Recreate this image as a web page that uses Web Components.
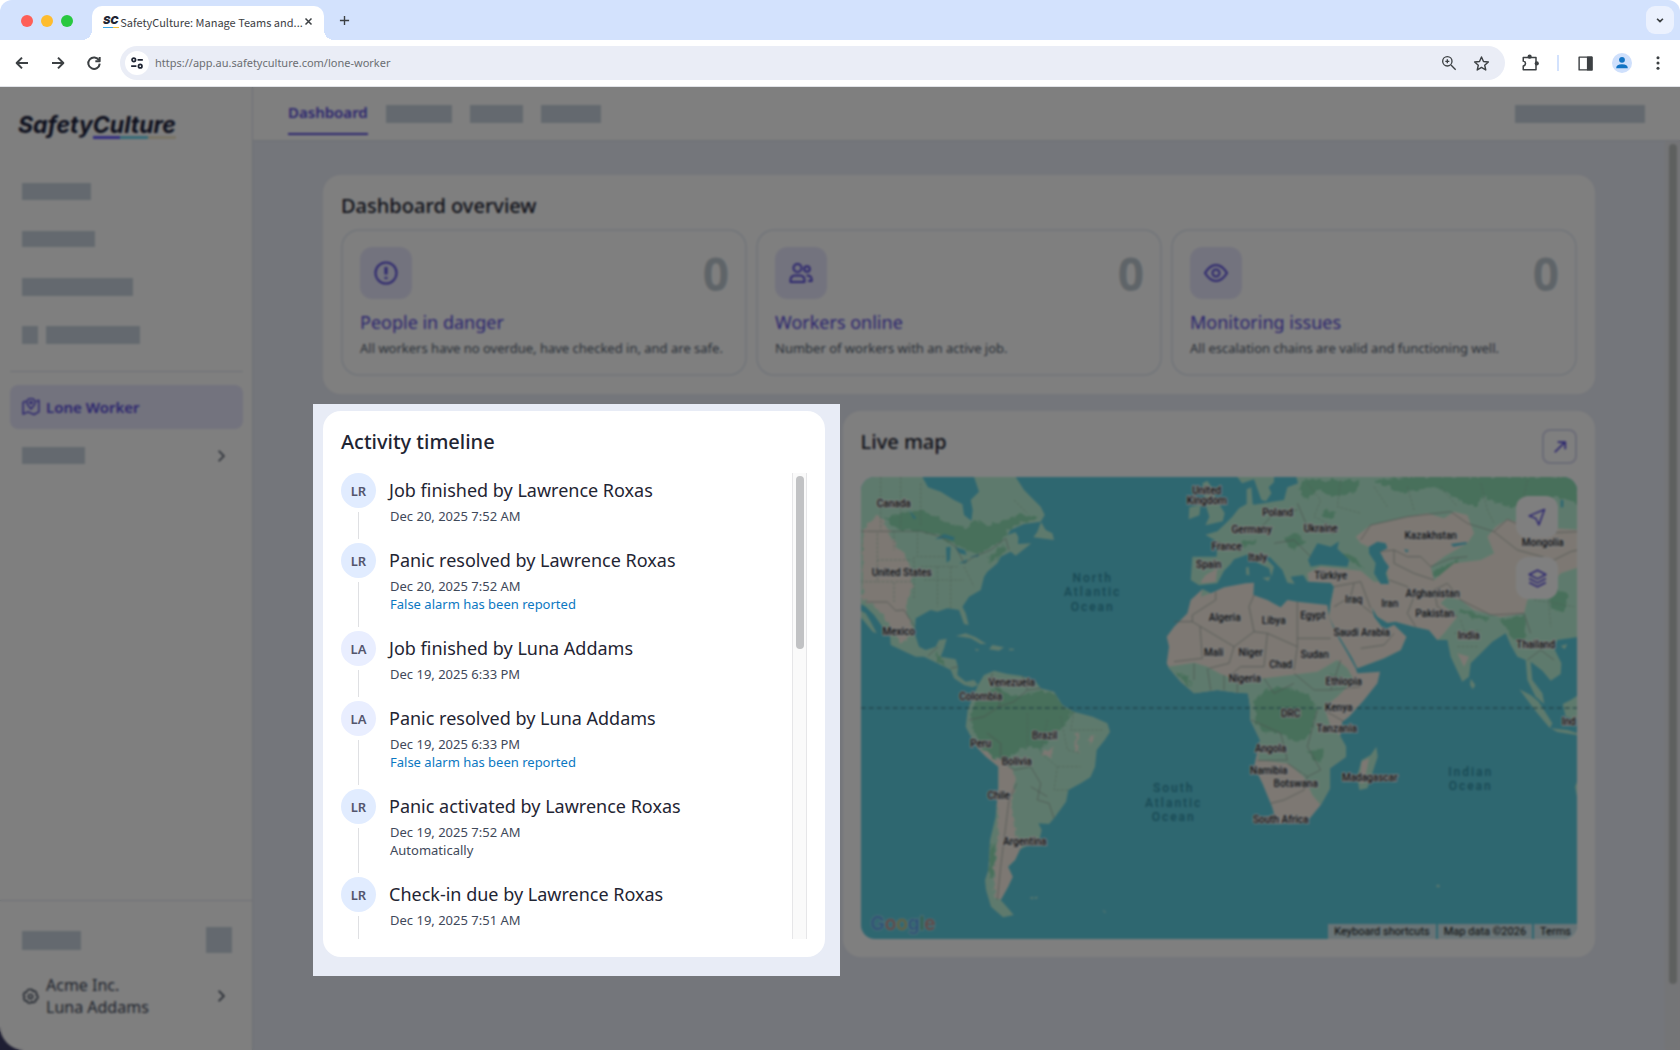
<!DOCTYPE html>
<html lang="en">
<head>
<meta charset="utf-8">
<title>SafetyCulture: Manage Teams and Workers</title>
<style>
  html, body { margin: 0; height: 100%; }
  body {
    --brand: #574bdc; --ink: #1f2533; --muted: #3f495a; --canvas: #e8ecf6;
    --line: #dbe0ea; --stub: #c9d3de; --lilac: #e7e7fc;
    display: flex; flex-direction: column; min-height: 100vh; overflow: hidden;
    background: #fff; color: var(--ink);
    font: 14px/20px "Noto Sans", "Open Sans", sans-serif;
  }
</style>
</head>
<body>
<browser-chrome tab="SafetyCulture: Manage Teams and..." url="https://app.au.safetyculture.com/lone-worker"></browser-chrome>
<app-shell>
  <side-nav slot="side"></side-nav>
  <top-tabs slot="top"></top-tabs>
  <panel-card heading="Dashboard overview">
    <stat-row>
      <stat-card icon="alert" heading="People in danger" count="0">All workers have no overdue, have checked in, and are safe.</stat-card>
      <stat-card icon="people" heading="Workers online" count="0">Number of workers with an active job.</stat-card>
      <stat-card icon="eye" heading="Monitoring issues" count="0">All escalation chains are valid and functioning well.</stat-card>
    </stat-row>
  </panel-card>
  <two-columns>
    <spot-light>
      <panel-card heading="Activity timeline" class="timeline">
        <time-line>
          <timeline-item initials="LR" heading="Job finished by Lawrence Roxas" date="Dec 20, 2025 7:52 AM"></timeline-item>
          <timeline-item initials="LR" heading="Panic resolved by Lawrence Roxas" date="Dec 20, 2025 7:52 AM" link="False alarm has been reported"></timeline-item>
          <timeline-item initials="LA" heading="Job finished by Luna Addams" date="Dec 19, 2025 6:33 PM"></timeline-item>
          <timeline-item initials="LA" heading="Panic resolved by Luna Addams" date="Dec 19, 2025 6:33 PM" link="False alarm has been reported"></timeline-item>
          <timeline-item initials="LR" heading="Panic activated by Lawrence Roxas" date="Dec 19, 2025 7:52 AM" note="Automatically"></timeline-item>
          <timeline-item initials="LR" heading="Check-in due by Lawrence Roxas" date="Dec 19, 2025 7:51 AM"></timeline-item>
        </time-line>
      </panel-card>
    </spot-light>
    <panel-card heading="Live map">
      <icon-button slot="action" icon="expand" label="Open live map"></icon-button>
      <live-map></live-map>
    </panel-card>
  </two-columns>
</app-shell>

<script>
const ICONS = {
  back: ['0 0 24 24', '<path d="M21 12H4M12 4l-8 8 8 8"/>'],
  forward: ['0 0 24 24', '<path d="M3 12h17M12 4l8 8-8 8"/>'],
  reload: ['0 0 24 24', '<path d="M19.500 8A8.600 8.600 0 1 0 20.600 13"/><path d="M20.500 3v6.500H14"/>'],
  tune: ['0 0 24 24', '<circle cx="6.500" cy="6.500" r="3"/><path d="M13 6.500h9M2 17.500h9"/><circle cx="17.500" cy="17.500" r="3"/>'],
  zoom: ['0 0 24 24', '<circle cx="9.500" cy="9.500" r="7"/><path d="M15 15l7 7M6.500 9.500h6M9.500 6.500v6"/>'],
  star: ['0 0 24 24', '<path d="M12 2.800l2.800 6.300 6.900.7-5.200 4.600 1.500 6.800-6-3.600-6 3.600 1.500-6.800L2.300 9.800l6.900-.7z"/>'],
  puzzle: ['0 0 24 24', '<path d="M3 9.500V4.500h17V21H3v-5q3-.5 3-3.200T3 9.500z"/><g fill="currentColor" stroke="none"><circle cx="11.500" cy="3.500" r="2.800"/><circle cx="21" cy="12.500" r="2.800"/></g>'],
  panel: ['0 0 24 24', '<path d="M3 3h18v18H3z"/><path d="M15 3h6v18h-6z" fill="currentColor"/>'],
  user: ['0 0 24 24', '<g fill="currentColor" stroke="none"><circle cx="12" cy="6.500" r="5"/><path d="M2 21q0-7 10-7t10 7z"/></g>'],
  dots: ['0 0 24 24', '<g fill="currentColor" stroke="none"><circle cx="12" cy="4" r="2.300"/><circle cx="12" cy="12" r="2.300"/><circle cx="12" cy="20" r="2.300"/></g>'],
  down: ['0 0 24 24', '<path d="M5 9l7 7 7-7"/>'],
  close: ['0 0 24 24', '<path d="M4 4l16 16M20 4L4 20"/>'],
  plus: ['0 0 24 24', '<path d="M12 2v20M2 12h20"/>'],
  right: ['0 0 24 24', '<path d="M8 3l9 9-9 9"/>'],
  alert: ['0 0 24 24', '<circle cx="12" cy="12" r="10.500"/><path d="M12 6v7.500M12 16v2" stroke-width="3"/>'],
  people: ['0 0 24 24', '<circle cx="8.500" cy="7" r="4"/><path d="M1.500 21v-1.500q0-5 4.500-5h5q4.500 0 4.500 5V21z"/><circle cx="18" cy="8" r="2.800"/><path d="M17.500 14.500q5.200-.3 5.200 4.500v1h-3.500"/>'],
  eye: ['0 0 24 24', '<path d="M1 12Q6 4 12 4t11 8q-5 8-11 8T1 12z"/><circle cx="12" cy="12" r="3.500"/>'],
  gear: ['0 0 24 24', '<path d="M9.500 2h5l1 2.800 3-.6 2.400 3.400-1 2.200 2.600 1.700-.5 3.800-2.800.6.200 3-3.600 1.800-2-1.500-1.800 1.900-3.900-.3-.9-2.800-3 .1-1.900-3.500 1.600-2.300-2-2.200 1.400-3.700 2.900-.1 1-2.800z"/><circle cx="12" cy="12" r="3"/>'],
  mappin: ['0 0 24 24', '<path d="M5 4L1.500 6v15.500L8 18.500l8 3.500 6.500-3.500V3L19 4.500"/><path d="M12 14.500Q6.500 9 6.500 6a5.500 5.500 0 0 1 11 0q0 3-5.500 8.500z"/><circle cx="12" cy="6" r="1.500"/>'],
  expand: ['0 0 24 24', '<path d="M3 21L20 4M8 3.500h13V16"/>'],
  send: ['0 0 24 24', '<path d="M22 2L1.500 10.500l9 3.500 4 8.500z"/>'],
  layers: ['0 0 24 24', '<path d="M12 1.500L22.500 7 12 12.500 1.500 7zM1.500 12L12 17.500 22.500 12M1.500 17L12 22.500 22.500 17"/>']
};
const icon = (name, size = 18, width = 2) =>
  `<svg width="${size}" height="${size}" viewBox="${ICONS[name][0]}" fill="none" stroke="currentColor" stroke-width="${width}" stroke-linejoin="round" aria-hidden="true">${ICONS[name][1]}</svg>`;

const BASE = `:host{display:block;box-sizing:border-box}*{box-sizing:border-box}svg{display:block;flex:none}
  button{font:inherit;color:inherit;border:0;padding:0;background:none;display:grid;place-items:center}
  a{color:inherit;text-decoration:none}h1,h2,h3,p,ul,ol{margin:0;padding:0;font:inherit}`;
const define = (name, css, html) => customElements.define(name, class extends HTMLElement {
  connectedCallback() {
    if (this.shadowRoot) return;
    const at = key => this.getAttribute(key) || '';
    this.attachShadow({ mode: 'open' }).innerHTML = `<style>${BASE}${css}</style>${html(at)}`;
  }
});

define('browser-chrome', `
  :host{flex:none;background:#fff;color:#3c4043;border-bottom:1px solid #e1e3e8}
  .strip{display:flex;height:40px;background:#d3e2fd;padding:6px 12px 0 20px;border-radius:12px 12px 0 0}
  .lights{display:flex;gap:8px;padding:9px 19px 0 1px}
  .lights i{width:12px;height:12px;border-radius:50%;background:#fe5f57}
  .lights i:nth-child(2){background:#febc2e}.lights i:nth-child(3){background:#28c840}
  .tab{position:relative;display:flex;align-items:center;justify-content:space-between;width:232px;padding:0 11px 3px 11px;background:#fff;border-radius:10px 10px 0 0}
  .tab::before,.tab::after{content:"";position:absolute;bottom:0;width:10px;height:10px}
  .tab::before{left:-10px;background:radial-gradient(circle at 0 0,transparent 10px,#fff 10px)}
  .tab::after{right:-10px;background:radial-gradient(circle at 100% 0,transparent 10px,#fff 10px)}
  .mark{width:16px;font:italic 900 11px/11px Inter,sans-serif;color:#1f2533}
  .mark i{display:block;height:1px;margin-top:1px;background:linear-gradient(90deg,#3ba7e8 60%,#f6c33b 60%)}
  .name{font:11px/16px "Noto Sans CJK SC","Noto Sans",sans-serif;white-space:nowrap}
  .new{width:20px;height:28px;margin-left:10px}
  .more{width:28px;height:28px;margin-left:auto;margin-right:-6px;background:#ebf1fe;border-radius:9px}
  .bar{display:flex;align-items:center;height:46px;padding:0 14px 0 14px;background:#fff}
  .nav{display:flex;gap:20px;margin-right:18px}
  .pill{flex:1;display:flex;align-items:center;height:34px;padding:0 15px 0 5px;border-radius:17px;background:#eaedf6}
  .site{width:24px;height:24px;border-radius:50%;background:#fff;margin-right:6px;color:#1f2533}
  input{flex:1;min-width:0;border:0;background:none;padding:0;font:11px/16px "Noto Sans",sans-serif;color:#6a6d72}
  .in{display:flex;gap:16px}
  .out{display:flex;align-items:center;gap:18px;margin-left:16px}
  .out i{width:2px;height:16px;background:#d3e2fd}
  .who{width:20px;height:20px;border-radius:50%;background:#cfe0fc;color:#1274c4}`,
  at => `<div class="strip"><div class="lights"><i></i><i></i><i></i></div>
    <div class="tab"><span class="mark">SC<i></i></span><span class="name">${at('tab')}</span><button aria-label="Close tab">${icon('close', 9, 4)}</button></div>
    <button class="new" aria-label="New tab">${icon('plus', 11, 3)}</button>
    <button class="more" aria-label="Search tabs">${icon('down', 10, 4)}</button></div>
  <div class="bar"><div class="nav"><button aria-label="Back">${icon('back', 16, 3)}</button><button aria-label="Forward">${icon('forward', 16, 3)}</button><button aria-label="Reload">${icon('reload', 16, 3)}</button></div>
    <div class="pill"><button class="site" aria-label="Site information">${icon('tune', 14, 3)}</button><input aria-label="Address" value="${at('url')}">
      <div class="in"><button aria-label="Zoom">${icon('zoom', 16)}</button><button aria-label="Bookmark">${icon('star', 17)}</button></div></div>
    <div class="out"><button aria-label="Extensions">${icon('puzzle', 18)}</button><i></i><button aria-label="Side panel">${icon('panel', 17)}</button>
      <button class="who" aria-label="Profile">${icon('user', 14)}</button><button aria-label="Menu">${icon('dots', 16)}</button></div></div>`);

define('app-shell', `
  :host{position:relative;flex:1;min-height:0;display:flex;overflow:hidden;background:#3c3c66}
  ::slotted(side-nav){flex:none}
  .main{flex:1;min-width:0;display:flex;flex-direction:column;background:var(--canvas)}
  .body{flex:1;min-height:0;display:flex}
  .content{flex:1;min-width:0;display:flex;flex-direction:column;gap:17px;padding:34px 70px 0}
  .scroll{width:15px;padding:3px;background:#e9eaee}
  .scroll i{display:block;width:8px;height:93%;margin-left:1px;border-radius:4px;background:#bdc1bf}
  .veil{position:absolute;inset:0;z-index:1;background:rgba(0,0,0,.5);backdrop-filter:blur(1px)}`,
  () => `<slot name="side"></slot><div class="main"><slot name="top"></slot>
    <div class="body"><div class="content"><slot></slot></div><div class="scroll"><i></i></div></div></div><div class="veil"></div>`);

define('stub-bar', `:host{display:inline-block;flex:none;background:var(--stub)}`, () => '');

define('side-nav', `
  :host{display:flex;flex-direction:column;width:253px;background:#fff;border-right:1px solid var(--line);border-radius:0 0 0 24px}
  .logo{align-self:flex-start;margin:24px 0 0 18px;font:italic 700 23px/28px Inter,sans-serif;font-feature-settings:"cv11";color:#1b1f3b}
  .logo i{display:block;width:83px;height:3px;margin:-3px 0 0 auto;background:linear-gradient(90deg,#6559ff 33%,#6cd5ee 33% 66%,#f2e8cc 66%)}
  ul{list-style:none;display:flex;flex-direction:column}
  li{display:flex;align-items:center;gap:8px;height:48px;padding:0 12px}
  nav{flex:1;padding:28px 9px 0 10px}
  .rule{height:1px;background:var(--line);margin:12px 0 13px}
  .on{display:flex;align-items:center;gap:6px;height:44px;padding:0 12px;border-radius:8px;background:var(--lilac);color:var(--brand);font-size:15px;font-weight:600}
  .row{justify-content:space-between;height:53px;padding-right:15px;color:#525b6b}
  footer{border-top:1px solid var(--line);padding:26px 20px 32px 22px}
  .top{display:flex;justify-content:space-between;align-items:center}
  .org{display:flex;align-items:center;gap:7px;margin-top:21px;width:100%;text-align:left;color:var(--muted);font-size:16px;line-height:22px}
  .org span{flex:1}.org svg:last-child{margin-right:4px}`,
  () => `<div class="logo">SafetyCulture<i></i></div>
  <nav><ul><li><stub-bar style="width:69px;height:17px"></stub-bar></li><li><stub-bar style="width:73px;height:16px"></stub-bar></li>
    <li><stub-bar style="width:111px;height:18px"></stub-bar></li><li><stub-bar style="width:16px;height:18px"></stub-bar><stub-bar style="width:94px;height:18px"></stub-bar></li></ul>
    <div class="rule"></div><a class="on" href="#lone-worker">${icon('mappin', 18)}Lone Worker</a>
    <ul><li class="row"><stub-bar style="width:63px;height:17px"></stub-bar>${icon('right', 14, 3)}</li></ul></nav>
  <footer><div class="top"><stub-bar style="width:59px;height:19px"></stub-bar><stub-bar style="width:26px;height:26px"></stub-bar></div>
    <button class="org">${icon('gear', 17)}<span>Acme Inc.<br>Luna Addams</span>${icon('right', 14, 3)}</button></footer>`);

define('top-tabs', `
  :host{display:flex;align-items:center;gap:18px;height:54px;padding:0 35px;background:#fff;border-bottom:1px solid var(--line);font-size:15px;font-weight:600}
  a{align-self:stretch;display:flex;align-items:center;margin-bottom:5px;padding-top:4px;border-bottom:2px solid var(--brand);color:var(--brand)}
  .end{margin-left:auto}`,
  () => `<a href="#dashboard">Dashboard</a><stub-bar style="width:66px;height:18px"></stub-bar><stub-bar style="width:53px;height:18px"></stub-bar>
    <stub-bar style="width:60px;height:18px"></stub-bar><stub-bar class="end" style="width:130px;height:18px"></stub-bar>`);

define('panel-card', `
  :host{display:flex;flex-direction:column;background:#fff;border-radius:18px;padding:18px}
  header{display:flex;justify-content:space-between;align-items:flex-start;min-height:36px}
  :host(.timeline) header{min-height:44px}
  h2{font-size:20px;line-height:26px;font-weight:550;color:var(--ink)}
  ::slotted([slot=action]){margin-bottom:13px}
  slot:not([name])::slotted(live-map){flex:1}`,
  at => `<header><h2>${at('heading')}</h2><slot name="action"></slot></header><slot></slot>`);

define('stat-row', `:host{display:grid;grid-template-columns:repeat(3,1fr);gap:9px}`, () => '<slot></slot>');

define('stat-card', `
  :host{border:2px solid #e8edf5;border-radius:18px;padding:16px 16px 16px 17px}
  .top{display:flex;justify-content:space-between;align-items:center;margin-bottom:11px}
  .tile{display:grid;place-items:center;width:52px;height:52px;border-radius:12px;background:var(--lilac);color:var(--brand)}
  b{font-size:46px;line-height:52px;font-weight:700;color:#bec9d1}
  h3{font-size:18px;line-height:24px;font-weight:450;color:var(--brand);margin-bottom:4px}
  p{font-size:13px;line-height:20px;color:#545f70;white-space:nowrap}`,
  at => `<div class="top"><span class="tile">${icon(at('icon'), 24)}</span><b>${at('count')}</b></div><h3><a href="#stat">${at('heading')}</a></h3><p><slot></slot></p>`);

define('two-columns', `:host{display:grid;grid-template-columns:2fr 3fr;gap:18px}`, () => '<slot></slot>');

define('spot-light', `
  :host{position:relative;z-index:2}
  :host::before{content:"";position:absolute;z-index:-1;inset:-7px -15px -19px -10px;background:var(--canvas)}`, () => '<slot></slot>');

define('time-line', `
  :host{display:flex;height:466px}
  .list{flex:1;overflow:hidden}
  .bar{width:15px;padding:3px;background:#fafafa;border:solid #e6e6e8;border-width:0 1px}
  .bar i{display:block;width:8px;height:173px;border-radius:4px;background:#c1c2c4}`,
  () => '<div class="list"><slot></slot></div><div class="bar"><i></i></div>');

define('timeline-item', `
  :host{display:flex;gap:13px}
  .rail{display:flex;flex-direction:column;align-items:center;width:35px}
  .face{display:grid;place-items:center;width:35px;height:35px;border-radius:50%;background:#e1ecff;color:#53556d;font-size:13px;font-weight:600}
  :host([initials=LA]) .face{background:#e9eeff}
  .rail i{flex:1;width:1px;margin:4px 0;background:#dfe0e3}
  .text{padding-bottom:18px;font-size:13px;line-height:18px;color:var(--muted)}
  h3{font-size:18px;line-height:34px;font-weight:450;color:var(--ink);white-space:nowrap}
  p{padding-left:1px}a{color:#0b78c2}`,
  at => `<div class="rail"><span class="face">${at('initials')}</span><i></i></div>
    <div class="text"><h3>${at('heading')}</h3><p>${at('date')}</p>${at('link') ? `<p><a href="#report">${at('link')}</a></p>` : ''}${at('note') ? `<p>${at('note')}</p>` : ''}</div>`);

define('icon-button', `
  button{width:35px;height:35px;border:2px solid #d6d7ee;border-radius:8px;color:var(--brand)}
  :host(.float) button{width:42px;height:42px;border:0;border-radius:12px;background:#fff}`,
  at => `<button aria-label="${at('label')}">${icon(at('icon'), at('size') || 14, at('size') ? 2 : 3)}</button>`);

const PLACES = [['Canada',33,26],['United States',41,95],['Mexico',38,154],['United',346,13],['Kingdom',346,23],['France',366,69],['Spain',348,87],
  ['Germany',391,52],['Poland',417,35],['Ukraine',460,51],['Italy',397,80],['Kazakhstan',570,58],['Mongolia',682,65],['Türkiye',470,98],
  ['Iraq',493,122],['Iran',529,126],['Afghanistan',572,116],['Pakistan',574,136],['Algeria',364,140],['Libya',413,143],['Egypt',452,138],
  ['Saudi Arabia',501,155],['India',608,158],['Thailand',675,167],['Mali',353,175],['Niger',390,175],['Sudan',454,177],['Chad',420,187],
  ['Nigeria',384,201],['Ethiopia',483,204],['Kenya',478,230],['DRC',430,236],['Venezuela',151,205],['Colombia',120,219],['Tanzania',476,251],
  ['Brazil',184,258],['Peru',120,266],['Angola',410,271],['Bolivia',156,284],['Namibia',408,293],['Botswana',435,306],['Chile',138,318],
  ['Madagascar',509,300],['South Africa',420,342],['Argentina',164,364],['Ind',708,244]];
const OCEANS = [['North',232,101],['Atlantic',232,115],['Ocean',232,130],['South',313,311],['Atlantic',313,326],['Ocean',313,340],['Indian',610,295],['Ocean',610,309]];
const words = (list, cls) => list.map(([t, x, y]) => `<text class="${cls}" x="${x}" y="${y + 4}">${t}</text>`).join('');

define('live-map', `
  :host{position:relative;min-height:462px;border-radius:14px;overflow:hidden;background:#5dcee1}
  .world{position:absolute;inset:0;width:100%;height:100%}
  .land{fill:#bdf5da}.forest{fill:#90e0b6}.dry{fill:#faf1e6}.sea{fill:#5dcee1}
  .edge{fill:none;stroke:#93a09a;stroke-width:2;stroke-linejoin:round}
  .state{fill:none;stroke:#98c0ac;stroke-width:2;stroke-dasharray:8 5}
  text{font:500 10px Roboto,sans-serif;text-anchor:middle}
  .place{fill:#26282b;stroke:#fff;stroke-width:2px;paint-order:stroke;stroke-linejoin:round}
  .ocean{font-size:12px;letter-spacing:2px;fill:#2f92a8}
  .tools{position:absolute;top:19px;right:19px;display:flex;flex-direction:column;gap:19px}
  .foot{position:absolute;left:10px;right:0;bottom:0;display:flex;justify-content:space-between;align-items:flex-end}
  .google{font:500 19px/30px Inter,sans-serif;color:#5a92f0;-webkit-text-stroke:2px #ffffff70;paint-order:stroke;opacity:.8}
  .r{color:#e0786e}.y{color:#e0b75a}.g{color:#62b57c}
  .terms{display:flex;gap:2px;font:11px/15px Roboto,sans-serif;color:#111}
  .terms>*{background:#d3e9ee;padding:0 6px}`,
  () => `<svg class="world" viewBox="0 0 717 462" preserveAspectRatio="xMidYMid slice" role="img" aria-label="World map">
  <defs>
    <filter id="soft" x="-5%" y="-5%" width="110%" height="110%">
      <feTurbulence type="fractalNoise" baseFrequency=".06" numOctaves="3" seed="4" result="n"/>
      <feDisplacementMap in="SourceGraphic" in2="n" scale="22" xChannelSelector="R" yChannelSelector="G" result="d"/>
      <feGaussianBlur in="d" stdDeviation="1.500"/>
    </filter>
    <filter id="coast" x="-2%" y="-2%" width="104%" height="104%">
      <feTurbulence type="fractalNoise" baseFrequency=".12" numOctaves="2" seed="9" result="n"/>
      <feDisplacementMap in="SourceGraphic" in2="n" scale="4" xChannelSelector="R" yChannelSelector="G"/>
    </filter>
    <clipPath id="dryclip"><path d="M412 855L430 825 460 812 500 822 545 828 585 845 600 865 640 875 665 915 700 935 756 950 800 970 808 995 792 1020 768 1050 763 1100 749 1132 720 1150 683 1170 676 1205 640 1255 625 1272 593 1270 603 1290 596 1320 538 1348 523 1380 502 1400 516 1430 502 1460 480 1500 502 1525 519 1545 487 1552 451 1520 436 1470 433 1440 443 1410 448 1320 465 1250 473 1160 473 1100 436 1070 407 1040 375 980 381 930 393 900z"/></clipPath>
  </defs>
  <g transform="translate(-20 -77) scale(.333333)"><g filter="url(#coast)">
    <path class="land" d="M60 231H245L262 262 300 275 340 300 365 312 370 345 392 362 396 330 390 300 415 275 405 245 400 231H525L550 270 570 290 600 320 612 345 600 365 550 372 510 390 500 405 525 397 533 412 532 432 572 430 525 467 510 455 480 470 470 490 440 515 430 530 420 570 385 590 365 620 375 640 384 675 370 672 355 630 320 625 290 635 270 630 225 655 222 700 235 740 255 750 285 740 295 720 318 716 310 745 300 770 345 778 352 800 350 825 375 845 400 840 412 855 395 862 370 855 340 835 330 810 290 790 250 770 225 770 150 735 148 710 125 680 100 645 75 620 60 612z"/>
    <g filter="url(#soft)"><path class="forest" d="M190 340L250 330 330 375 380 385 400 360 450 375 530 345 585 348 570 362 540 368 505 388 490 415 440 450 400 460 340 435 290 405 250 395 170 385 130 355z M445 470L485 435 495 450 450 490z M65 410L88 430 80 470 65 465z M285 760L300 770 315 800 290 785z"/>
    <path class="dry" d="M66 405L80 370 110 345 130 360 145 400 170 440 195 470 215 520 212 575 195 610 198 640 215 685 205 712 180 728 155 690 130 650 95 610 66 600z"/></g>
    <path class="land" d="M60 632L75 640 90 665 108 700 97 696 60 652z M601 366L615 390 635 400 640 420 578 412 590 395z M345 708L375 700 405 712 437 732 420 732 390 715z M445 748L455 735 490 742 475 752z M402 746l14 3-8 5z M505 746h14v5h-14z"/>
    <path class="sea" d="M283 418L310 402 342 412 338 422 315 415z M316 442L330 440 328 480 318 488z M342 440L372 450 378 465 356 460z M355 490L380 478 376 490z M385 472L415 462 412 470z M205 330l22 25-8 2z"/>
    <path class="edge" d="M60 394H240L300 410 345 440 370 490 400 470 450 450 495 415 505 450"/>
    <path class="edge" d="M75 606H140L165 632 190 630 222 680M262 768L292 740M330 805L352 800"/>
    <path class="state" d="M110 400V480H215M160 395V450M165 545H215M110 480V545H160V606M230 400V470H320M240 500H350M250 540H370M290 500V620M330 500V625M370 500L400 560M60 545H110M220 470V600M180 231V390M120 231V390M240 250V380M520 300L560 340"/>
    <path class="land" d="M412 855L430 825 460 812 500 822 545 828 585 845 600 865 640 875 665 915 700 935 756 950 800 970 808 995 792 1020 768 1050 763 1100 749 1132 720 1150 683 1170 676 1205 640 1255 625 1272 593 1270 603 1290 596 1320 538 1348 523 1380 502 1400 516 1430 502 1460 480 1500 502 1525 519 1545 487 1552 451 1520 436 1470 433 1440 443 1410 448 1320 465 1250 473 1160 473 1100 436 1070 407 1040 375 980 381 930 393 900z"/>
    <g clip-path="url(#dryclip)"><g filter="url(#soft)"><path class="forest" d="M430 880L470 860 520 890 600 875 640 880 665 915 700 935 680 960 650 1000 600 1050 560 1040 520 1060 480 1080 440 1060 400 1000 388 935z M443 1400L452 1330 464 1330 460 1420 446 1440z"/>
    <path class="dry" d="M370 975L410 1040 440 1060 490 1090 518 1110 528 1150 512 1200 518 1260 535 1330 545 1348 530 1380 510 1400 520 1430 510 1460 480 1500 460 1480 462 1400 474 1300 465 1200 460 1100 420 1070z M703 1000L712 1000 712 1055 703 1050z M740 1020L765 1005 750 1035z M600 1060L640 1040 630 1070z"/></g></g>
    <path class="edge" d="M455 820L450 850 480 875 475 920 430 950 385 960M475 920L520 905 560 870 600 865M545 828L560 870M440 1000L480 1030 480 1080 520 1110 570 1100 600 1150 590 1200 625 1210 640 1255M528 1150L505 1200 495 1280 480 1400 470 1500M570 1160L620 1190"/>
    <path class="state" d="M560 940V1040M620 960L600 1060M660 950L680 1050 720 1060M600 1060L650 1100 720 1100M650 1100L640 1170 683 1170M700 935L690 990 790 990"/>
    <path class="land" d="M1090 280L1085 250 1100 242 1115 265 1128 300 1152 340 1146 364 1094 376 1106 350 1096 318z M1046 322L1080 314 1076 346 1044 358z M1190 231L1204 250 1240 238 1262 300 1276 304 1292 280 1284 262 1300 246 1300 231z M1218 268L1232 262 1236 312H1218z"/>
    <path class="land" d="M1365 225H2220V710L2150 720 2140 745 2162 790 2160 822 2130 842 2105 812 2070 785 2075 840 2105 880 2111 912 2085 890 2060 840 2055 780 2030 770 2010 735 1995 700 1955 725 1890 790 1885 830 1865 845 1830 770 1820 720 1790 720 1765 690 1720 680 1665 665 1640 668 1610 650 1593 622 1600 650 1630 690 1660 675 1697 710 1680 750 1630 775 1550 805 1535 775 1490 700 1465 650 1470 610 1480 560 1470 548 1400 545 1388 525 1350 530 1362 552 1340 548 1325 510 1288 472 1268 468 1300 500 1292 530 1285 505 1250 488 1225 462 1180 478 1170 492 1150 512 1130 550 1075 556 1050 540 1055 470 1128 470 1130 425 1094 404 1130 394 1150 375 1175 350 1195 325 1225 308 1240 314 1330 300 1340 262 1372 250z M1890 836L1904 855 1896 868 1888 855z M1216 502h8l2 24-9-2z M1265 534l24-4-6 14z"/>
    <g filter="url(#soft)"><path class="forest" d="M1385 240H1560L1540 280 1480 290 1430 270 1400 300 1375 280z M1600 240L1700 231H2211V310L2150 290 2100 300 2050 330 1970 310 1930 290 1900 320 1840 290 1780 260 1680 280z M1330 410L1370 400 1390 430 1360 450 1335 430z M1200 422L1245 418 1235 435 1205 438z M1500 455L1540 470 1570 505 1520 480z M1770 520L1850 480 1860 500 1800 535z M1975 660L2055 645 2055 715 2030 735 2000 690z M1860 625L1950 655 1940 665 1855 640z M1450 330l40 10-20 15-30-5z M2130 560l50 20-10 60-40-20z"/></g>
    <path class="dry" d="M1400 520L1440 500 1560 512 1600 545 1645 545 1635 500 1615 455 1560 430 1545 410 1590 375 1700 350 1760 340 1810 355 1840 335 1880 345 1900 400 1880 430 1810 470 1770 500 1780 540 1840 490 1920 480 1960 460 1940 410 1965 380 2000 358 2080 380 2220 390V500L2160 520 2120 570 2060 600 2050 640 1980 652 1900 630 1860 600 1820 590 1800 610 1850 650 1810 700 1790 720 1765 690 1720 680 1665 665 1640 668 1610 650 1593 622 1600 650 1630 690 1660 675 1697 710 1680 750 1630 775 1550 805 1535 775 1490 700 1465 650 1470 610 1480 560 1470 548 1405 545z M1080 545L1095 525 1130 505 1125 545 1085 550z M1850 760L1885 770 1870 800z"/>
    <path class="sea" d="M1402 480L1430 430 1470 440 1495 424 1490 446 1526 480 1520 500 1440 494 1410 500z M1585 440L1610 425 1635 430 1640 445 1618 455 1630 480 1645 500 1635 520 1645 552 1620 552 1600 520 1605 490 1585 460z M1830 432L1878 426 1878 432 1838 440z M2160 300h8v22h-8z M1690 448l14 2-6 8z"/>
    <path class="edge" d="M1560 420L1590 375 1700 350 1830 335 1880 370 1960 395 2000 358 2090 400 2211 395M1960 395L2030 450 2140 480 2190 455 2211 450M1618 455L1660 450 1700 470 1740 470 1770 500 1830 475 1880 470M1660 450V490L1720 520 1780 540M1645 540L1700 560 1720 590 1780 570 1820 550 1860 600 1950 645 2050 640 2070 700M1720 590L1700 640 1725 680M1780 570L1790 620 1850 650M1480 560L1560 545 1590 625M1540 550L1530 590 1480 620M1530 590L1595 640M1560 745L1630 735 1660 700M1245 400L1300 340 1370 330M1130 425L1200 455M1300 430L1360 420 1410 470M1370 310L1400 380 1480 400M2060 780L2100 750 2140 780"/>
    <path class="state" d="M1400 250L1440 300 1420 350 1480 380M1500 240L1490 320 1560 340M1600 260L1640 320M1700 260L1720 330M1800 260L1850 320M1920 250L1940 330 1960 370M2060 240L2040 330M1840 700L1920 690M1850 740H1910M1860 660L1880 720M2080 600L2200 620M2120 560L2130 680"/>
    <path class="dry" d="M1085 568L1110 580 1150 562 1215 550 1240 548 1238 585 1280 600 1320 622 1340 600 1370 605 1460 615 1465 650 1485 700 1520 760 1545 805 1550 820 1618 815 1610 850 1570 900 1525 950 1505 965 1498 1010 1516 1040V1070L1468 1105V1165L1440 1215 1403 1260 1309 1273 1294 1220 1265 1150 1240 1100 1258 1020 1229 960 1228 920 1222 880 1190 878 1130 870 1060 880 1020 845 985 805 978 790 985 740 978 710 1000 680 1040 640 1050 600z"/>
    <path class="land" d="M982 800L1060 788 1100 800 1140 822 1165 832 1200 850 1270 835 1350 825 1430 815 1490 780 1520 805 1540 840 1490 890 1450 920 1470 980 1500 1010 1516 1040V1070L1468 1105V1165L1440 1215 1415 1185 1390 1130 1340 1090 1252 1080 1258 1020 1229 960 1228 920 1222 880 1190 878 1130 870 1060 880 1020 845z M1085 568L1110 580 1080 590z"/>
    <g filter="url(#soft)"><path class="forest" d="M1240 900L1270 870 1330 860 1400 880 1430 930 1410 1000 1370 1030 1320 1000 1265 995 1244 960z M1010 820L1040 830 1055 860 1035 850z M1470 820L1500 830 1490 860z M1400 1060L1450 1040 1440 1090z"/></g>
    <path class="edge" d="M1125 575V600L1055 645 1055 665 1180 740 1240 695 1225 620 1240 585M1055 665H1000M1078 680L1085 775 1000 785M1180 740L1165 790 1105 805M1240 695L1280 700 1370 740 1360 810M1280 700L1270 800 1200 800 1165 830M1370 605V715H1470M1370 715V740M1360 820L1420 870 1470 870 1500 780M1470 870L1560 860M1232 960L1320 1000 1340 1080 1250 1082M1340 1090L1400 1130 1390 1170 1330 1200 1290 1210M1400 1130L1440 1110 1400 1040 1430 930M1450 930L1510 965M1270 835L1300 880 1360 850M1060 790V840M1100 805L1110 870M1150 825V870M1190 850V878"/>
    <path class="land" d="M1607 1040L1611 1070 1580 1165 1556 1170 1549 1130 1563 1080 1590 1065z M2036 868L2070 885 2094 905 2135 970 2128 985 2090 940z M2130 985L2180 990 2211 1000V1006L2150 996z M2166 912L2190 900 2220 880V960L2175 950z M2160 738l20-6-8 16z M2203 1160L2211 1140V1200z M566 1494l10-4 2 8z M580 1492l12-2-6 8z M785 1528l10 8-2 4z M1786 1456l8-2 4 6-8 2z"/>
    <path class="dry" d="M1562 1085L1585 1075 1570 1150 1558 1150z"/>
  </g></g>
  <path d="M0 231H717" fill="none" stroke="#35707d" stroke-width="1" stroke-dasharray="5 3"/>
  ${words(OCEANS, 'ocean')}${words(PLACES, 'place')}</svg>
  <div class="tools"><icon-button class="float" icon="send" size="18" label="Centre on me"></icon-button><icon-button class="float" icon="layers" size="19" label="Map layers"></icon-button></div>
  <div class="foot"><span class="google">G<span class="r">o</span><span class="y">o</span>g<span class="g">l</span><span class="r">e</span></span>
    <div class="terms"><a href="#keys">Keyboard shortcuts</a><span>Map data ©2026</span><a href="#terms">Terms</a></div></div>`);
</script>
</body>
</html>
